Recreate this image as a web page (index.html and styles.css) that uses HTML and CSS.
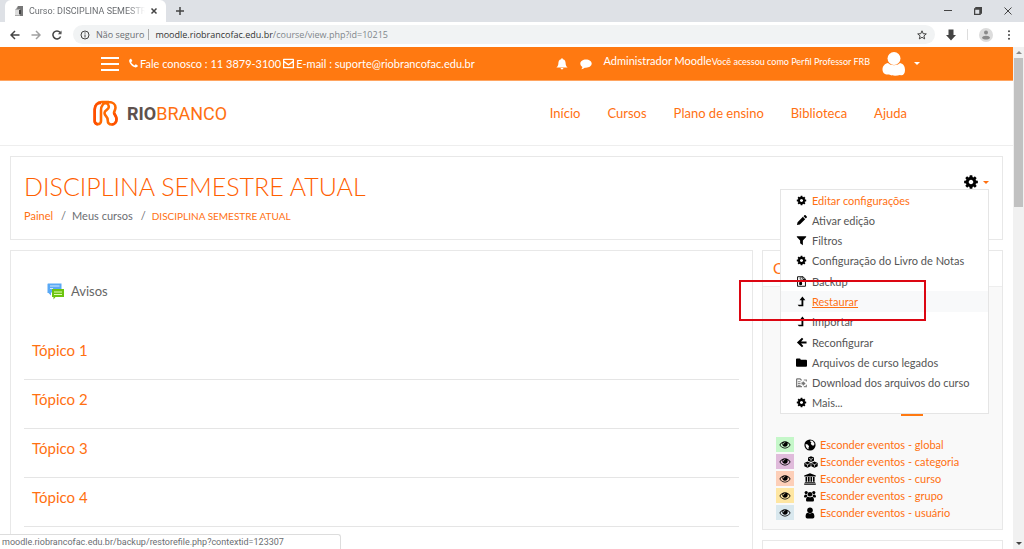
FILE: index.html
```
<!DOCTYPE html>
<html lang="pt-br">

<head>
  <meta charset="utf-8">
  <title>Curso: DISCIPLINA SEMESTRE ATUAL</title>
  <link rel="stylesheet" href="styles.css">
</head>

<body>
  <svg class="defs" aria-hidden="true">
    <symbol id="cog" viewBox="0 0 1792 1792"><path d="M1152 896q0-106-75-181t-181-75-181 75-75 181 75 181 181 75 181-75 75-181zm512-109v222q0 12-8 23t-20 13l-185 28q-19 54-39 91 35 50 107 138 10 12 10 25t-9 23q-27 37-99 108t-94 71q-12 0-26-9l-138-108q-44 23-91 38-16 136-29 186-7 28-36 28h-222q-14 0-24.500-8.500t-11.500-21.500l-28-184q-49-16-90-37l-141 107q-10 9-25 9-14 0-25-11-126-114-165-168-7-10-7-23 0-12 8-23 15-21 51-66.500t54-70.500q-27-50-41-99l-183-27q-13-2-21-12.500t-8-23.500v-222q0-12 8-23t19-13l186-28q14-46 39-92-40-57-107-138-10-12-10-24 0-10 9-23 26-36 98.500-107.500t94.500-71.500q13 0 26 10l138 107q44-23 91-38 16-136 29-186 7-28 36-28h222q14 0 24.500 8.500t11.500 21.500l28 184q49 16 90 37l142-107q9-9 24-9 13 0 25 10 129 119 165 170 7 8 7 22 0 12-8 23-15 21-51 66.500t-54 70.500q26 50 41 98l183 28q13 2 21 12.500t8 23.500z"/></symbol>
    <symbol id="eye" viewBox="0 0 1792 1792"><path d="M1664 960q-152-236-381-353 61 104 61 225 0 185-131.500 316.500t-316.500 131.500-316.500-131.500-131.500-316.500q0-121 61-225-229 117-381 353 133 205 333.500 326.500t434.500 121.500 434.500-121.500 333.500-326.500zm-720-384q0-20-14-34t-34-14q-125 0-214.500 89.500t-89.500 214.500q0 20 14 34t34 14 34-14 14-34q0-86 61-147t147-61q20 0 34-14t14-34zm848 384q0 34-20 69-140 230-376.500 368.500t-499.500 138.500-499.500-139-376.500-368q-20-35-20-69t20-69q140-229 376.500-368t499.500-139 499.500 139 376.500 368q20 35 20 69z"/></symbol>
    <symbol id="phone" viewBox="0 0 1792 1792"><path d="M1600 1240q0 27-10 70.500t-21 68.500q-21 50-122 106-94 51-186 51-27 0-53-3.500t-57.500-12.500-47-14.500-55.500-20.500-49-18q-98-35-175-83-127-79-264-216t-216-264q-48-77-83-175-3-9-18-49t-20.500-55.500-14.500-47-12.500-57.500-3.500-53q0-92 51-186 56-101 106-122 25-11 68.500-21t70.500-10q14 0 21 3 18 6 53 76 11 19 30 54t35 63.500 31 53.500q3 4 17.500 25t21.500 35.500 7 28.500q0 20-28.500 50t-62 55-62 53-28.500 46q0 9 5 22.500t8.500 20.500 14 24 11.500 19q76 137 174 235t235 174q2 1 19 11.500t24 14 20.500 8.500 22.500 5q18 0 46-28.500t53-62 55-62 50-28.500q14 0 28.500 7t35.500 21.500 25 17.500q25 15 53.500 31t63.500 35 54 30q70 35 76 53 3 7 3 21z"/></symbol>
    <symbol id="mail" viewBox="0 0 12 12"><path d="M.7 1.500h10.600v9H.7zM.7 3.500 6 7.500l5.300-4" fill="none" stroke="currentColor" stroke-width="1.400" stroke-linejoin="round"/></symbol>
    <symbol id="bell" viewBox="0 0 12 12"><path d="M6 .3c.6 0 .9.400.9.900C9 1.700 9.600 3.500 9.600 5c0 2.300.8 3.600 2 4.600H.4c1.200-1 2-2.300 2-4.600 0-1.500.6-3.300 2.700-3.800C5.100.7 5.400.3 6 .3zM4.600 10h2.800a1.400 1.400 0 0 1-2.800 0z"/></symbol>
    <symbol id="comment" viewBox="0 0 12 12"><path d="M6 1.500c3.200 0 5.700 1.800 5.700 4.100S9.200 9.800 6 9.800l-1.200-.1c-1 .9-2.200 1.400-3.600 1.600.7-.7 1.100-1.400 1.200-2.300C1.100 8.200.3 7 .3 5.600c0-2.300 2.500-4.100 5.700-4.100z"/></symbol>
    <symbol id="pencil" viewBox="0 0 12 12"><path d="m1 11 .7-3.200L7.500 2l2.500 2.500-5.800 5.800zM8.200 1.300l1-1c.4-.4.900-.4 1.300 0l1.200 1.200c.4.400.4.900 0 1.300l-1 1z"/></symbol>
    <symbol id="filter" viewBox="0 0 12 12"><path d="M1.200 1.300h9.600c.4 0 .5.500.3.800L7.500 6v5.200L4.500 9V6L.9 2.100c-.2-.3-.1-.8.300-.8z"/></symbol>
    <symbol id="backup" viewBox="0 0 12 12"><path d="M1.700.8h6L10.300 3.500v7.700H1.700zM7.500.8v3h2.800" fill="none" stroke="currentColor"/><path d="M5 1h1v1H5zM4 2h1v1H4zm1 1h1v1H5zM4 4h1v1H4zm1 1h1l.7 3.300a1.700 1.500 0 1 1-3.300 0L4 5.500h1z"/></symbol>
    <symbol id="levelup" viewBox="0 0 12 12"><path d="M7 .5 10.200 4.500H8v6.800H3.200L1.800 9.500H6v-5H3.800z"/></symbol>
    <symbol id="arrowleft" viewBox="0 0 12 12"><path d="M6.500.8 8 2.300 5.600 4.800h5.900v2.400H5.600L8 9.700l-1.500 1.500L1 6z"/></symbol>
    <symbol id="folder" viewBox="0 0 12 12"><path d="M0 2.500C0 1.900.4 1.500 1 1.500h3c.6 0 1 .4 1 1V3h6c.6 0 1 .4 1 1v5.500c0 .6-.4 1-1 1H1c-.6 0-1-.4-1-1z"/></symbol>
    <symbol id="download" viewBox="0 0 12 12"><path d="M.7 2h3.800l1 1.300h1M.7 2v8.500h5.800" fill="none" stroke="#777" stroke-width="1.300"/><path d="M2 4.500h3v1.200H2zm0 2h3v1.200H2zm0 2h3v1.200H2z" fill="#888"/><path d="M8.500 3.300h2.800V5M11.300 8.500v2H8.500" fill="none" stroke="#888" stroke-width="1.300"/><path d="M6 5.800h1.500V4.300L10.500 7l-3 2.700V8.200H6z" fill="#777"/></symbol>
    <symbol id="globe" viewBox="0 0 12 12"><circle cx="6" cy="6" r="5.600"/><path d="M6.500 1.300 9 2.200 10.600 5 9.400 6.800 8 6.200 6.700 4.800l.8-1.300-1.200-.8zM1.600 5l2 .6 1.500 1.600-.6 1.500.1 1.600C3 9.700 1.300 8 1.600 5z" fill="#f9f9f9"/></symbol>
    <symbol id="cubes" viewBox="0 0 14 12"><path d="m7 .2 3 1.300v3.300L7 6.100 4 4.800V1.500zM3.500 5.500l3.200 1.400v3.300l-3.200 1.500-3.200-1.500V6.900zm7 0 3.200 1.400v3.300l-3.200 1.500-3.200-1.500V6.900z"/><path d="m4.800 2.300 2.200 1 2.200-1M7 3.300v2M1.200 7.600l2.300 1 2.300-1M3.500 8.600v2M8.200 7.600l2.300 1 2.300-1M10.500 8.600v2" fill="none" stroke="#f9f9f9" stroke-width=".7"/></symbol>
    <symbol id="bank" viewBox="0 0 12 12"><path d="M6 .3 11.800 2.600v.9H.2v-.9zM1.500 4h1.700v4.800H1.500zm2.500 0h1.600v4.800H4zm2.500 0h1.600v4.800H6.500zM9 4h1.600v4.800H9zM.8 9.200h10.400v.8H.8zM.2 10.500h11.600v1.200H.2z"/></symbol>
    <symbol id="group" viewBox="0 0 12 12"><circle cx="2.200" cy="2.600" r="1.600"/><circle cx="9.800" cy="2.600" r="1.600"/><circle cx="6" cy="4.200" r="2.300"/><path d="M0 6.800c0-1.500.6-2.400 1.700-2.400L3.200 5 3.400 6.200 2.200 7.400H.8c-.5 0-.8-.2-.8-.6zM12 6.800c0-1.500-.6-2.400-1.700-2.400L8.800 5l-.2 1.200 1.200 1.200h1.400c.5 0 .8-.2.800-.6zM2 10c0-2 .7-3.300 2.200-3.300.9.800 2.700.8 3.600 0C9.300 6.700 10 8 10 10c0 1-.6 1.600-1.500 1.600h-5C2.600 11.600 2 11 2 10z"/></symbol>
    <symbol id="user" viewBox="0 0 12 12"><circle cx="6" cy="3.200" r="2.800"/><path d="M1.600 9.500c0-2.200.8-3.800 2.300-3.800 1.200 1 3 1 4.200 0 1.500 0 2.300 1.600 2.300 3.800 0 1.200-.7 2-1.700 2H3.300c-1 0-1.700-.8-1.700-2z"/></symbol>
  </svg>

  <div class="tabs">
    <div class="tab">
      <svg class="favicon" viewBox="0 0 10 12"><path d="M1 5 4 1l5 1v9H1z" fill="#aaa"/><path d="M4 1h5v10H6V4H3z" fill="#777"/><path d="M1 5h4v5H1z" fill="#ddd"/><path d="M5 5h2v4H5z" fill="#444"/></svg>
      <span class="tab-title">Curso: DISCIPLINA SEMESTRE ATUAL</span>
      <button class="plain" aria-label="Fechar guia"><svg class="stroke" width="8" height="8" viewBox="0 0 8 8"><path d="m1.500 1.500 5 5m0-5-5 5"/></svg></button>
    </div>
    <button class="plain new-tab" aria-label="Nova guia"><svg class="stroke" width="8" height="8" viewBox="0 0 8 8"><path d="M4 0v8M0 4h8"/></svg></button>
    <div class="win-buttons">
      <button class="plain" aria-label="Minimizar"><svg class="stroke thin" width="8" height="8" viewBox="0 0 8 8"><path d="M0 3.500h8"/></svg></button>
      <button class="plain" aria-label="Restaurar janela"><svg class="stroke" width="8" height="8" viewBox="0 0 8 8"><path d="M.5 2h5.500v5.500H.5zM2 2V.5h5.500V6H6"/></svg></button>
      <button class="plain" aria-label="Fechar"><svg class="stroke thin" width="8" height="8" viewBox="0 0 8 8"><path d="m.5.5 7 7m0-7-7 7"/></svg></button>
    </div>
  </div>

  <div class="toolbar">
    <button class="plain" aria-label="Voltar"><svg class="stroke" width="10" height="10" viewBox="0 0 10 10"><path d="M9.500 5H1m4-4L1 5l4 4"/></svg></button>
    <button class="plain off" aria-label="Avançar"><svg class="stroke" width="10" height="10" viewBox="0 0 10 10"><path d="M.5 5H9M5 1l4 4-4 4"/></svg></button>
    <button class="plain" aria-label="Recarregar"><svg class="stroke" width="10" height="10" viewBox="0 0 10 10"><path d="M8.600 6.500A4 4 0 1 1 8 2.300l1 1"/><path d="M9.500.5v3.700H5.800z" fill="#555" stroke="none"/></svg></button>
    <div class="omnibox">
      <svg class="stroke thin" width="10" height="10" viewBox="0 0 10 10"><circle cx="5" cy="5" r="4"/><path d="M5 4.500v3M5 2.400v1.200"/></svg>
      <span class="secure">Não seguro</span>
      <span class="url"><b>moodle.riobrancofac.edu.br</b>/course/view.php?id=10215</span>
      <button class="plain star" aria-label="Favoritar"><svg class="stroke thin" width="10" height="10" viewBox="0 0 10 10"><path d="m5 .8 1.200 2.900 3.100.2-2.400 2 .8 3L5 7.300 2.300 8.900l.8-3-2.400-2 3.100-.2z"/></svg></button>
    </div>
    <svg width="10" height="12" viewBox="0 0 10 12"><path d="M2.500.5h5v5.500H10l-5 5.500-5-5.500h2.500z" fill="#444"/></svg>
    <span class="sep"></span>
    <svg width="14" height="14" viewBox="0 0 14 14"><circle cx="7" cy="7" r="7" fill="#dcdcdc"/><circle cx="7" cy="4.500" r="2" fill="#8a8a8a"/><path d="M3 10c0-3 8-3 8 0-2 2-6 2-8 0z" fill="#8a8a8a"/></svg>
    <button class="plain" aria-label="Menu"><svg width="10" height="10" viewBox="0 0 10 10" fill="#444"><circle cx="5" cy="1.200" r="1"/><circle cx="5" cy="5" r="1"/><circle cx="5" cy="8.800" r="1"/></svg></button>
  </div>

  <div class="view">
    <div class="page">
      <div class="topbar">
        <button class="hamburger" aria-label="Menu lateral"><i></i><i></i><i></i></button>
        <svg class="icon"><use href="#phone"/></svg>
        <span>Fale conosco : 11 3879-3100</span>
        <svg class="icon mail"><use href="#mail"/></svg>
        <span>E-mail : suporte@riobrancofac.edu.br</span>
        <div class="user">
          <svg class="icon"><use href="#bell"/></svg>
          <svg class="icon"><use href="#comment"/></svg>
          <div class="user-name">Administrador Moodle<small>Você acessou como Perfil Professor FRB</small></div>
          <svg width="24" height="26" viewBox="0 0 24 26" fill="#fff"><circle cx="12" cy="7.500" r="6.500"/><path d="M6 12c3 3 9 3 12 0 4 1 5 4 5 7 0 4-2 6-5 5-3 1-8 1-11-.5C3 24 .5 22 .5 18.500.500 15 3 12.500 6 12z"/></svg>
          <span class="caret"></span>
        </div>
      </div>

      <header class="site-header">
        <a class="logo" href="#">
          <svg width="25" height="26" viewBox="0 0 25 26" fill="none" stroke="#ff6a00" stroke-width="2.600" stroke-linejoin="round"><path d="M16 2H9C4.500 2 1.700 5 1.700 9.500V21a3.100 3.100 0 0 0 6.300 0V10.500C8 6 10.500 2 15.500 2c4.500 0 7 2.500 7 5.500 0 2.500-1.500 3.800-1.500 5.300 0 1.700 2.500 3 2.500 6.200 0 3-2 5.500-4.800 5.500-2.700 0-4-1.700-4-4.500 0-3.500-3.200-4-3.200-7 0-3.300 4.300-3 4.300-6C15.800 5 14 3 12 3"/><path d="M8 3C4 3 1.700 6 1.700 9.500V21a3.100 3.100 0 0 0 3.100 3.200M21 13c.5 1.500 2.500 3 2.500 6 0 3-2 5.500-4.800 5.500" stroke="#ff4f00"/></svg>
          <span class="logo-text"><b>RIO</b>BRANCO</span>
        </a>
        <nav>
          <a href="#">Início</a>
          <a href="#">Cursos</a>
          <a href="#">Plano de ensino</a>
          <a href="#">Biblioteca</a>
          <a href="#">Ajuda</a>
        </nav>
      </header>

      <div class="content">
        <div class="box page-header">
          <div>
            <h1>DISCIPLINA SEMESTRE ATUAL</h1>
            <div class="breadcrumb"><a href="#">Painel</a><span>/</span>Meus cursos<span>/</span><a class="current" href="#">DISCIPLINA SEMESTRE ATUAL</a></div>
          </div>
          <div class="settings">
            <button class="settings-button" aria-label="Configurações"><svg class="icon"><use href="#cog"/></svg><span class="caret"></span></button>
            <div class="menu">
              <a class="active" href="#"><svg class="icon"><use href="#cog"/></svg>Editar configurações</a>
              <a href="#"><svg class="icon"><use href="#pencil"/></svg>Ativar edição</a>
              <a href="#"><svg class="icon"><use href="#filter"/></svg>Filtros</a>
              <a href="#"><svg class="icon"><use href="#cog"/></svg>Configuração do Livro de Notas</a>
              <a href="#"><svg class="icon"><use href="#backup"/></svg>Backup</a>
              <a class="hover" href="#"><svg class="icon"><use href="#levelup"/></svg>Restaurar</a>
              <a href="#"><svg class="icon"><use href="#levelup"/></svg>Importar</a>
              <a href="#"><svg class="icon"><use href="#arrowleft"/></svg>Reconfigurar</a>
              <a href="#"><svg class="icon"><use href="#folder"/></svg>Arquivos de curso legados</a>
              <a href="#"><svg class="icon"><use href="#download"/></svg>Download dos arquivos do curso</a>
              <a href="#"><svg class="icon"><use href="#cog"/></svg>Mais...</a>
              <div class="highlight"></div>
            </div>
          </div>
        </div>

        <div class="columns">
          <main class="box course">
            <a class="forum" href="#">
              <svg width="17" height="17" viewBox="0 0 17 17"><path d="M1 .5h13.500v9H4v3L1.500 10H.5V1z" fill="#5aa9f5"/><path d="M3 3h9.500M3 5.500h3" stroke="#d5eaff"/><path d="M5 6h12v8H8.500L6.500 16.500V14H5z" fill="#6cc40f"/><path d="M7 9h8m-8 2.500h8" stroke="#e0ffb0"/></svg>
              Avisos
            </a>
            <h3>Tópico 1</h3>
            <h3>Tópico 2</h3>
            <h3>Tópico 3</h3>
            <h3>Tópico 4</h3>
          </main>
          <aside>
            <div class="box calendar">
              <h2>Calendário</h2>
              <div class="month"><div class="today"></div></div>
              <ul>
                <li><svg class="icon eye global"><use href="#eye"/></svg><svg class="icon"><use href="#globe"/></svg><a href="#">Esconder eventos - global</a></li>
                <li><svg class="icon eye category"><use href="#eye"/></svg><svg class="icon wide"><use href="#cubes"/></svg><a href="#">Esconder eventos - categoria</a></li>
                <li><svg class="icon eye course-event"><use href="#eye"/></svg><svg class="icon"><use href="#bank"/></svg><a href="#">Esconder eventos - curso</a></li>
                <li><svg class="icon eye group"><use href="#eye"/></svg><svg class="icon"><use href="#group"/></svg><a href="#">Esconder eventos - grupo</a></li>
                <li><svg class="icon eye personal"><use href="#eye"/></svg><svg class="icon"><use href="#user"/></svg><a href="#">Esconder eventos - usuário</a></li>
              </ul>
            </div>
            <div class="box next"></div>
          </aside>
        </div>
      </div>
    </div>
    <div class="scrollbar">
      <span class="arrow up"></span>
      <div class="thumb"></div>
      <span class="arrow down"></span>
    </div>
    <div class="status">moodle.riobrancofac.edu.br/backup/restorefile.php?contextid=123307</div>
  </div>
</body>

</html>
```
FILE: styles.css
```
* {
  box-sizing: border-box;
}

body {
  margin: 0;
  height: 100vh;
  display: flex;
  flex-direction: column;
  overflow: hidden;
  background: #fff;
  color: #6b6e72;
  font: 11px "Century Gothic", Lato, sans-serif;
}

a {
  color: #ff7011;
  text-decoration: none;
}

.defs {
  position: absolute;
  width: 0;
  height: 0;
}

.icon {
  width: 12px;
  height: 12px;
  flex: none;
  fill: currentColor;
}

.plain {
  display: flex;
  padding: 0;
  border: 0;
  background: none;
}

.stroke {
  fill: none;
  stroke: #444;
  stroke-width: 1.5;
}

.thin {
  stroke-width: 1;
}

.off {
  opacity: .5;
}

/* browser */
.tabs,
.toolbar {
  display: flex;
  align-items: center;
  flex: none;
  font-family: "Open Sans", sans-serif;
  font-size: 9px;
}

.tabs {
  height: 22px;
  padding-left: 5px;
  background: #dee1e6;
}

.tab {
  display: flex;
  align-items: center;
  gap: 5px;
  width: 161px;
  height: 22px;
  padding: 0 8px 0 9px;
  background: #fff;
  border-radius: 6px 6px 0 0;
}

.favicon {
  width: 10px;
  height: 12px;
  flex: none;
}

.tab-title {
  flex: 1;
  overflow: hidden;
  white-space: nowrap;
  font-family: Roboto, sans-serif;
  -webkit-mask-image: linear-gradient(90deg, #000 85%, transparent);
}

.new-tab {
  margin-left: 10px;
}

.win-buttons {
  display: flex;
  gap: 22px;
  margin-left: auto;
  padding-right: 12px;
}

.toolbar {
  height: 25px;
  gap: 11px;
  padding: 0 10px;
}

.omnibox {
  display: flex;
  align-items: center;
  flex: 1;
  height: 19px;
  padding: 0 8px 0 7px;
  background: #f1f3f4;
  border-radius: 10px;
}

.secure {
  margin-left: 6px;
  padding-right: 4px;
  border-right: 1px solid #aaa;
  line-height: 11px;
}

.url {
  margin-left: 6px;
  color: #80868b;
}

.url b {
  color: #333;
  font-weight: normal;
}

.star {
  margin-left: auto;
}

.sep {
  width: 1px;
  height: 11px;
  background: #ddd;
}

.view {
  position: relative;
  display: flex;
  flex: 1;
  min-height: 0;
}

.page {
  flex: 1;
  overflow: hidden;
}

.scrollbar {
  display: flex;
  flex-direction: column;
  align-items: center;
  width: 11px;
  padding: 4px 1px;
  background: #f1f1f1;
}

.thumb {
  width: 9px;
  height: 149px;
  margin-top: 4px;
  background: #c1c1c1;
}

.arrow {
  border: 3px solid transparent;
}

.up {
  border-top: 0;
  border-bottom: 3px solid #888;
}

.down {
  margin-top: auto;
  border-bottom: 0;
  border-top: 3px solid #444;
}

.status {
  position: absolute;
  left: 0;
  bottom: 0;
  width: 341px;
  height: 15px;
  padding-left: 2px;
  background: #fff;
  border: 1px solid #ddd;
  border-width: 1px 1px 0 0;
  border-radius: 0 3px 0 0;
  font: 9px/14px Roboto, sans-serif;
}

/* orange bar */
.topbar {
  display: flex;
  align-items: center;
  height: 34px;
  padding: 0 93px 0 101px;
  background: #ff7911;
  border-bottom: 1px solid #ffa561;
  color: #fff;
}

.topbar > .icon {
  width: 11px;
  height: 11px;
  margin-right: 1px;
}

.topbar > .mail {
  margin: 0 2px;
}

.hamburger {
  display: flex;
  flex-direction: column;
  gap: 4px;
  width: 18px;
  margin-right: 9px;
  padding: 0;
  border: 0;
  background: none;
}

.hamburger i {
  width: 100%;
  height: 2px;
  background: #fff;
}

.user {
  display: flex;
  align-items: center;
  gap: 12px;
  margin-left: auto;
}

.user-name {
  padding-bottom: 6px;
}

.user-name small {
  font-size: 9px;
}

.user svg:last-of-type {
  margin-right: -4px;
}

.caret {
  border: 3px solid transparent;
  border-top-color: currentColor;
  border-bottom: 0;
}

.site-header {
  display: flex;
  align-items: center;
  justify-content: space-between;
  height: 65px;
  padding: 0 106px 0 93px;
  border-bottom: 1px solid #eee;
}

.logo {
  display: flex;
  align-items: center;
  gap: 9px;
}

.logo-text {
  font: 18px Roboto, sans-serif;
}

.logo-text b {
  color: #5e514d;
}

nav {
  display: flex;
  gap: 27px;
  font-size: 13px;
}

.content {
  padding: 10px;
}

.box {
  border: 1px solid #e8e8e8;
}

.page-header {
  display: flex;
  justify-content: space-between;
  align-items: flex-start;
  height: 84px;
  padding: 12px 13px;
}

h1 {
  margin: 0;
  color: #ff6000;
  font-size: 25px;
  font-weight: 300;
  line-height: 34px;
}

.breadcrumb {
  padding-top: 5px;
  line-height: 16px;
}

.breadcrumb span {
  margin: 0 6px 0 8px;
}

.current {
  font-size: 10px;
}

.settings {
  position: relative;
}

.settings-button {
  display: flex;
  align-items: center;
  gap: 4px;
  padding: 5px 0;
  border: 0;
  background: none;
  color: #ff7011;
}

.settings-button .icon {
  width: 16px;
  height: 16px;
  color: #000;
}

/* settings dropdown */
.menu {
  position: absolute;
  top: 20px;
  right: 0;
  z-index: 2;
  display: grid;
  grid-auto-rows: 1fr;
  width: 209px;
  height: 225px;
  background: #fff;
  border: 1px solid #e5e5e5;
}

.menu a {
  display: flex;
  align-items: center;
  gap: 5px;
  padding-left: 15px;
  color: #555;
}

.menu .icon {
  width: 11px;
  height: 11px;
  color: #000;
}

.menu a.active {
  color: #ff7011;
}

.menu a.hover {
  background: #f8f9fa;
  color: #ff7011;
  text-decoration: underline;
}

.highlight {
  position: absolute;
  top: 90px;
  left: -42px;
  width: 187px;
  height: 41px;
  border: 2px solid #dc0612;
}

.columns {
  display: grid;
  grid-template-columns: 1fr 241px;
  gap: 9px;
  margin-top: 10px;
}

.course {
  padding: 27px 13px;
}

.forum {
  display: flex;
  align-items: center;
  gap: 7px;
  height: 26px;
  padding-left: 23px;
  margin-bottom: 27px;
  color: #666;
  font-size: 13px;
}

h3 {
  height: 49px;
  margin: 0;
  padding-left: 8px;
  border-bottom: 1px solid #e5e5e5;
  color: #ff7011;
  font-size: 15px;
  font-weight: 400;
  line-height: 38px;
}

.calendar {
  background: #f9f9f9;
}

h2 {
  height: 36px;
  margin: 0;
  padding-left: 10px;
  background: #fff;
  border-bottom: 1px solid #eee;
  color: #ff7011;
  font-size: 15px;
  font-weight: 400;
  line-height: 35px;
}

.month {
  height: 129px;
  display: flex;
  align-items: flex-end;
  justify-content: flex-end;
  padding-right: 79px;
}

.today {
  width: 22px;
  height: 3px;
  background: #ff7911;
}

ul {
  margin: 0;
  padding: 20px 12px 8px 13px;
  list-style: none;
}

li {
  display: flex;
  align-items: center;
  height: 17px;
}

li .icon {
  margin-right: 4px;
  color: #000;
}

li .wide {
  width: 14px;
  margin-right: 2px;
}

li .eye {
  width: 18px;
  height: 15px;
  margin-right: 10px;
  padding: 2px;
}

.global {
  background: #c5f7c9;
}

.category {
  background: #e0bbdb;
}

.course-event {
  background: #fdcfb8;
}

.group {
  background: #fee6a2;
}

.personal {
  background: #d9e8ee;
}

.next {
  height: 60px;
  margin-top: 10px;
}
```
